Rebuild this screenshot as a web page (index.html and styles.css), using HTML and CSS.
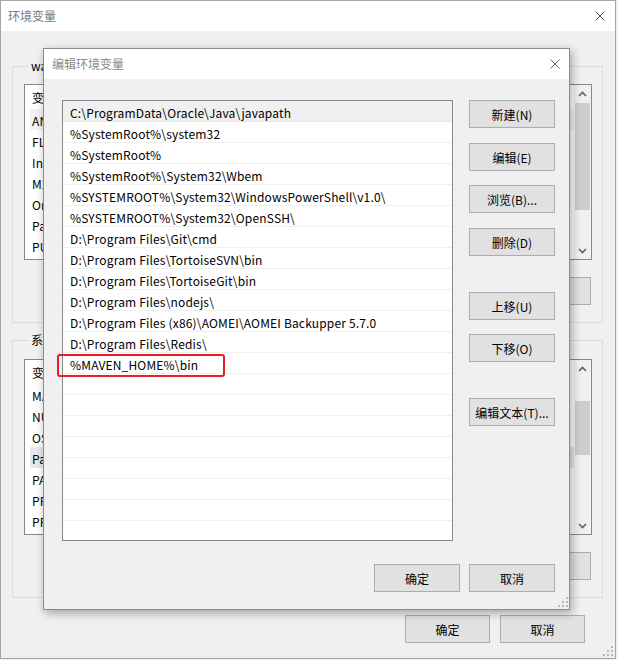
FILE: index.html
```html
<!DOCTYPE html>
<html lang="zh-CN">
<head>
<meta charset="utf-8">
<title>编辑环境变量</title>
<link rel="stylesheet" href="styles.css">
</head>
<body>
<div class="desk">
  <div class="win main">
    <div class="titlebar">
      <span class="title">环境变量</span>
      <svg class="close" width="10" height="10" viewBox="0 0 10 10"><path d="M0.5 0.5L9.5 9.5M9.5 0.5L0.5 9.5" stroke="#5a5a5a" stroke-width="1"/></svg>
    </div>
    <div class="win-body">
      <fieldset class="group g1">
        <legend>wangsl 的用户变量(U)</legend>
        <div class="lv">
          <div class="lv-rows">
            <div class="lv-head"><span>变量</span><span>值</span></div>
            <div class="lv-row hover">ANDROID_HOME</div>
            <div class="lv-row">FLUTTER_STORAGE_BASE_URL</div>
            <div class="lv-row">IntelliJ IDEA</div>
            <div class="lv-row">M2_HOME</div>
            <div class="lv-row">OneDrive</div>
            <div class="lv-row">Path</div>
            <div class="lv-row">PUB_HOSTED_URL</div>
          </div>
          <div class="vscroll">
            <div class="sb-btn"><svg width="9" height="6" viewBox="0 0 9 6"><path d="M1 5L4.5 1.5L8 5" fill="none" stroke="#606060" stroke-width="1.6"/></svg></div>
            <div class="sb-track"><div class="sb-thumb t1"></div></div>
            <div class="sb-btn"><svg width="9" height="6" viewBox="0 0 9 6"><path d="M1 1L4.5 4.5L8 1" fill="none" stroke="#606060" stroke-width="1.6"/></svg></div>
          </div>
        </div>
        <div class="btnrow">
          <button class="btn">新建(N)...</button>
          <button class="btn">编辑(E)...</button>
          <button class="btn">删除(D)</button>
        </div>
      </fieldset>
      <fieldset class="group g2">
        <legend>系统变量(S)</legend>
        <div class="lv">
          <div class="lv-rows">
            <div class="lv-head"><span>变量</span><span>值</span></div>
            <div class="lv-row">MAVEN_HOME</div>
            <div class="lv-row">NUMBER_OF_PROCESSORS</div>
            <div class="lv-row">OS</div>
            <div class="lv-row selected">Path</div>
            <div class="lv-row">PATHEXT</div>
            <div class="lv-row">PROCESSOR_ARCHITECTURE</div>
            <div class="lv-row">PROCESSOR_IDENTIFIER</div>
          </div>
          <div class="vscroll">
            <div class="sb-btn"><svg width="9" height="6" viewBox="0 0 9 6"><path d="M1 5L4.5 1.5L8 5" fill="none" stroke="#606060" stroke-width="1.6"/></svg></div>
            <div class="sb-track"><div class="sb-thumb t2"></div></div>
            <div class="sb-btn"><svg width="9" height="6" viewBox="0 0 9 6"><path d="M1 1L4.5 4.5L8 1" fill="none" stroke="#606060" stroke-width="1.6"/></svg></div>
          </div>
        </div>
        <div class="btnrow">
          <button class="btn">新建(W)...</button>
          <button class="btn">编辑(I)...</button>
          <button class="btn">删除(L)</button>
        </div>
      </fieldset>
      <div class="footer main-footer">
        <button class="btn">确定</button>
        <button class="btn">取消</button>
      </div>
      <svg class="grip main-grip" width="10" height="10" viewBox="0 0 10 10">
        <rect x="8" y="0" width="2" height="2" fill="#b8b8b8"/>
        <rect x="4" y="4" width="2" height="2" fill="#b8b8b8"/><rect x="8" y="4" width="2" height="2" fill="#b8b8b8"/>
        <rect x="0" y="8" width="2" height="2" fill="#b8b8b8"/><rect x="4" y="8" width="2" height="2" fill="#b8b8b8"/><rect x="8" y="8" width="2" height="2" fill="#b8b8b8"/>
      </svg>
    </div>
  </div>

  <div class="win dialog">
    <div class="titlebar">
      <span class="title">编辑环境变量</span>
      <svg class="close" width="10" height="10" viewBox="0 0 10 10"><path d="M0.5 0.5L9.5 9.5M9.5 0.5L0.5 9.5" stroke="#6a6a6a" stroke-width="1"/></svg>
    </div>
    <div class="dlg-body">
      <div class="dlg-main">
        <div class="pathlist">
          <div class="prow first">C:\ProgramData\Oracle\Java\javapath</div>
          <div class="prow">%SystemRoot%\system32</div>
          <div class="prow">%SystemRoot%</div>
          <div class="prow">%SystemRoot%\System32\Wbem</div>
          <div class="prow">%SYSTEMROOT%\System32\WindowsPowerShell\v1.0\</div>
          <div class="prow">%SYSTEMROOT%\System32\OpenSSH\</div>
          <div class="prow">D:\Program Files\Git\cmd</div>
          <div class="prow">D:\Program Files\TortoiseSVN\bin</div>
          <div class="prow">D:\Program Files\TortoiseGit\bin</div>
          <div class="prow">D:\Program Files\nodejs\</div>
          <div class="prow">D:\Program Files (x86)\AOMEI\AOMEI Backupper 5.7.0</div>
          <div class="prow">D:\Program Files\Redis\</div>
          <div class="prow">%MAVEN_HOME%\bin</div>
          <div class="prow"></div>
          <div class="prow"></div>
          <div class="prow"></div>
          <div class="prow"></div>
          <div class="prow"></div>
          <div class="prow"></div>
          <div class="prow"></div>
          <div class="prow last"></div>
        </div>
        <div class="side">
          <button class="btn sbtn">新建(N)</button>
          <button class="btn sbtn g15">编辑(E)</button>
          <button class="btn sbtn g14">浏览(B)...</button>
          <button class="btn sbtn g15">删除(D)</button>
          <button class="btn sbtn g36">上移(U)</button>
          <button class="btn sbtn g14">下移(O)</button>
          <button class="btn sbtn g36">编辑文本(T)...</button>
        </div>
      </div>
      <div class="footer dlg-footer">
        <button class="btn">确定</button>
        <button class="btn">取消</button>
      </div>
      <svg class="grip dlg-grip" width="10" height="10" viewBox="0 0 10 10">
        <rect x="8" y="0" width="2" height="2" fill="#b8b8b8"/>
        <rect x="4" y="4" width="2" height="2" fill="#b8b8b8"/><rect x="8" y="4" width="2" height="2" fill="#b8b8b8"/>
        <rect x="0" y="8" width="2" height="2" fill="#b8b8b8"/><rect x="4" y="8" width="2" height="2" fill="#b8b8b8"/><rect x="8" y="8" width="2" height="2" fill="#b8b8b8"/>
      </svg>
    </div>
    <div class="highlight"></div>
  </div>
</div>
</body>
</html>
```

FILE: styles.css
```css
* { box-sizing: border-box; }
html, body { margin: 0; padding: 0; }
body {
  background: #f0f0f0;
  font-family: "Microsoft YaHei UI", "Microsoft YaHei", "Noto Sans CJK SC", sans-serif;
  font-size: 12px;
  color: #000;
  width: 618px;
  height: 660px;
  overflow: hidden;
}
.desk { position: relative; width: 618px; height: 660px; }

.win { display: flex; flex-direction: column; }
.main {
  width: 616px;
  height: 659px;
  border: 1px solid #a5a5a5;
  background: #f0f0f0;
}
.titlebar {
  height: 30px;
  background: #fff;
  display: flex;
  align-items: center;
  justify-content: space-between;
  flex: none;
}
.main .titlebar { padding: 0 10px 0 7px; }
.title { color: #777; font-size: 12px; line-height: 16px; }
.win-body {
  position: relative;
  flex: 1;
  padding: 27px 12px 0 11px;
  display: flex;
  flex-direction: column;
}

.group {
  margin: 0;
  border: 1px solid #dcdcdc;
  padding: 10px 10px 17px 11px;
  min-width: 0;
}
.group legend {
  margin-left: 5px;
  padding: 0 2px;
  font-size: 12px;
  line-height: 16px;
}
.g2 { margin-top: 9px; padding-top: 11px; }

.lv {
  height: 176px;
  border: 1px solid #828790;
  background: #fff;
  display: flex;
}
.lv-rows { flex: 1; padding-top: 0; overflow: hidden; letter-spacing: 0.15px; }
.lv-head {
  height: 24px;
  display: flex;
  align-items: center;
  padding-left: 7px;
  padding-top: 1px;
  gap: 150px;
}
.lv-row {
  height: 21px;
  line-height: 21px;
  padding-top: 1px;
  margin-left: 5px;
  padding-left: 2px;
  white-space: nowrap;
}
.lv-row.hover { background: #f3f3f3; }
.lv-row.selected { background: #e8e8e8; }

.vscroll {
  width: 17px;
  flex: none;
  display: flex;
  flex-direction: column;
  background: #f0f0f0;
}
.sb-btn {
  height: 17px;
  display: flex;
  align-items: center;
  justify-content: center;
  flex: none;
}
.sb-track { flex: 1; position: relative; }
.sb-thumb { margin: 0 1px; background: #cdcdcd; }
.t1 { margin-top: 1px; height: 107px; }
.t2 { margin-top: 24px; height: 54px; }

.btnrow {
  margin-top: 17px;
  display: flex;
  justify-content: flex-end;
  gap: 10px;
  padding-right: 1px;
}
.btn {
  width: 85px;
  height: 28px;
  background: #e1e1e1;
  border: 1px solid #adadad;
  font-family: inherit;
  font-size: 12px;
  color: #000;
  padding: 0;
  margin: 0;
}

.main-footer {
  margin-top: 17px;
  display: flex;
  justify-content: flex-end;
  gap: 10px;
  padding-right: 18px;
}
.grip { position: absolute; }
.main-grip { right: 2px; bottom: 2px; }

/* dialog */
.dialog {
  position: absolute;
  left: 43px;
  top: 48px;
  width: 527px;
  height: 562px;
  border: 1px solid #8c8c8c;
  background: #f0f0f0;
  box-shadow: 2px 3px 9px rgba(0, 0, 0, 0.33);
}
.dialog .titlebar { padding: 0 9px 0 8px; }
.dialog .title { color: #8a8a8a; }
.dlg-body {
  position: relative;
  flex: 1;
  padding: 21px 13px 0 18px;
  display: flex;
  flex-direction: column;
}
.dlg-main { display: flex; gap: 16px; }
.pathlist {
  width: 391px;
  height: 441px;
  border: 1px solid #828790;
  background: #fff;
  overflow: hidden;
  letter-spacing: 0.17px;
}
.prow {
  height: 21px;
  line-height: 18px;
  padding-top: 3px;
  padding-left: 7px;
  border-bottom: 1px solid #f0f0f0;
  white-space: nowrap;
}
.prow.first { background: #f0f0f0; border-bottom-color: #e6e6e6; }
.side { display: flex; flex-direction: column; padding-top: 0; }
.sbtn { width: 86px; }
.g15 { margin-top: 15px; }
.g14 { margin-top: 14px; }
.g36 { margin-top: 36px; }

.dlg-footer {
  margin-top: 23px;
  display: flex;
  justify-content: flex-end;
  gap: 9px;
  padding-right: 1px;
}
.dlg-footer .btn { width: 86px; }
.dlg-grip { right: 1px; bottom: 2px; }

.highlight {
  position: absolute;
  left: 13px;
  top: 305px;
  width: 168px;
  height: 23px;
  border: 2px solid #ec1c24;
  border-radius: 3px;
}
```
